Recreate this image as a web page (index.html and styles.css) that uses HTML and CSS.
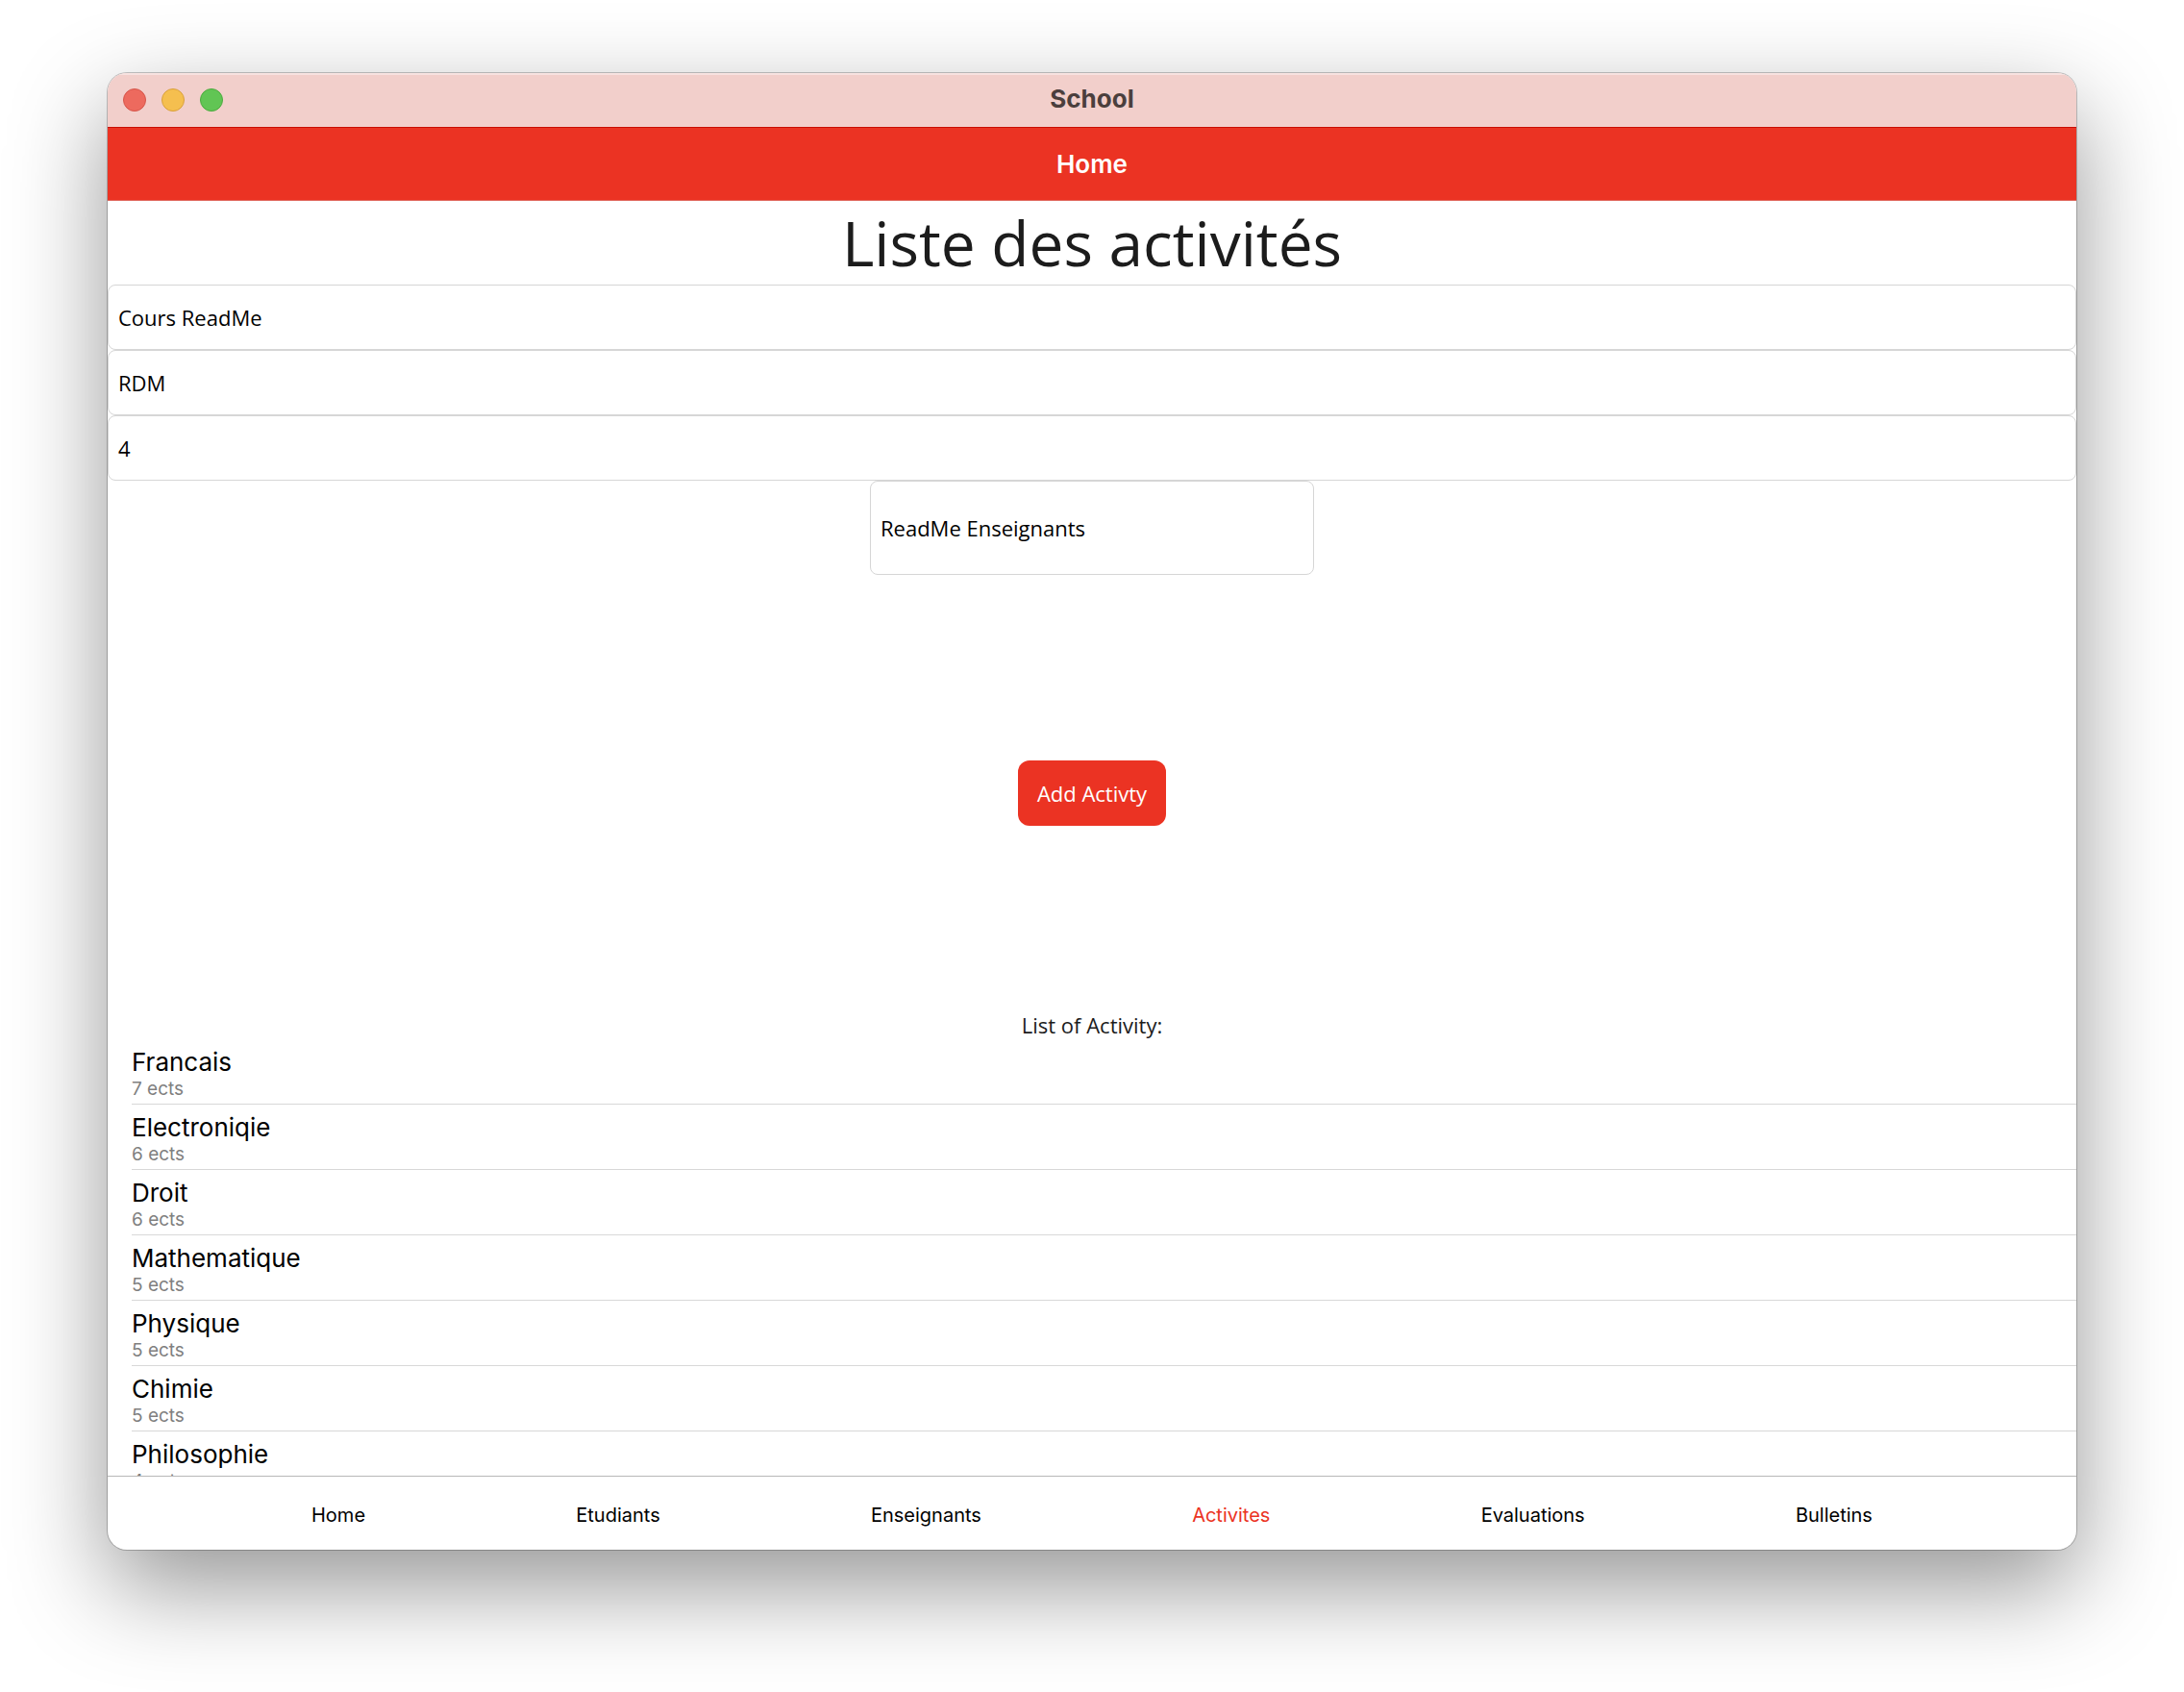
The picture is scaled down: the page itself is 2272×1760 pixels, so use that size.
FILE: index.html
```
<!DOCTYPE html>
<html lang="fr">
<head>
<meta charset="utf-8">
<meta name="viewport" content="width=device-width, initial-scale=1">
<title>School</title>
<link rel="stylesheet" href="styles.css">
</head>
<body>
<div class="window">
  <header class="titlebar">
    <div class="controls">
      <button class="dot dot-close" type="button" aria-label="Fermer"></button>
      <button class="dot dot-minimize" type="button" aria-label="Réduire"></button>
      <button class="dot dot-zoom" type="button" aria-label="Agrandir"></button>
    </div>
    <div class="title">School</div>
  </header>
  <div class="navbar">Home</div>
  <main class="content">
    <h1 class="heading">Liste des activités</h1>
    <form class="form">
      <input class="field" type="text" aria-label="Nom" value="Cours ReadMe">
      <input class="field" type="text" aria-label="Code" value="RDM">
      <input class="field" type="text" aria-label="Crédits" value="4">
      <select class="field picker" aria-label="Enseignant">
        <option>ReadMe Enseignants</option>
      </select>
      <button class="add" type="button">Add Activty</button>
    </form>
    <h2 class="caption">List of Activity:</h2>
    <ul class="list">
      <li class="row"><span class="name">Francais</span><span class="detail">7 ects</span></li>
      <li class="row"><span class="name">Electroniqie</span><span class="detail">6 ects</span></li>
      <li class="row"><span class="name">Droit</span><span class="detail">6 ects</span></li>
      <li class="row"><span class="name">Mathematique</span><span class="detail">5 ects</span></li>
      <li class="row"><span class="name">Physique</span><span class="detail">5 ects</span></li>
      <li class="row"><span class="name">Chimie</span><span class="detail">5 ects</span></li>
      <li class="row"><span class="name">Philosophie</span><span class="detail">4 ects</span></li>
    </ul>
  </main>
  <nav class="tabs">
    <a class="tab" href="#home">Home</a>
    <a class="tab" href="#etudiants">Etudiants</a>
    <a class="tab" href="#enseignants">Enseignants</a>
    <a class="tab tab-active" href="#activites" aria-current="page">Activites</a>
    <a class="tab" href="#evaluations">Evaluations</a>
    <a class="tab" href="#bulletins">Bulletins</a>
  </nav>
</div>
</body>
</html>
```
FILE: styles.css
```
* {
  box-sizing: border-box;
}

body {
  margin: 0;
  height: 100vh;
  padding: 76px 112px 148px;
  display: flex;
  overflow: hidden;
  background: #fff;
  color: #1c1c1c;
  font-family: Inter, sans-serif;
}

.window {
  flex: 1;
  min-width: 0;
  display: flex;
  flex-direction: column;
  overflow: hidden;
  border-radius: 20px;
  background: #fff;
  box-shadow: 0 0 0 1px rgba(0, 0, 0, 0.22), 0 38px 100px rgba(0, 0, 0, 0.42);
}

.titlebar {
  flex: none;
  height: 56px;
  padding: 0 16px;
  display: grid;
  grid-template-columns: 1fr auto 1fr;
  align-items: center;
  background: #f2cfcb;
  box-shadow: inset 0 2px 0 #f7e2e0;
}

.controls {
  display: flex;
  gap: 16px;
}

.dot {
  width: 24px;
  height: 24px;
  padding: 0;
  border: 1px solid;
  border-radius: 50%;
}

.dot-close {
  background: #ed6a5e;
  border-color: #d5554a;
}

.dot-minimize {
  background: #f5bf4f;
  border-color: #d8a03c;
}

.dot-zoom {
  background: #61c554;
  border-color: #4caa3f;
}

.title {
  padding-bottom: 2px;
  color: #4b3f3d;
  font-size: 26px;
  font-weight: 700;
  line-height: 32px;
}

.navbar {
  flex: none;
  height: 77px;
  border-top: 1px solid #c90f02;
  border-bottom: 1px solid #e0695f;
  background: #eb3323;
  color: #fff;
  font-size: 26px;
  font-weight: 600;
  line-height: 75px;
  text-align: center;
}

.content {
  flex: 1;
  min-height: 0;
  overflow: hidden;
  font-family: "Open Sans", sans-serif;
}

.heading {
  margin: 0;
  font-size: 64px;
  font-weight: 400;
  line-height: 87px;
  text-align: center;
}

.form {
  display: flex;
  flex-direction: column;
  align-items: center;
}

.field {
  width: 100%;
  height: 68px;
  padding: 0 10px;
  border: 1px solid #d6d6d6;
  border-radius: 8px;
  background: #fff;
  color: #000;
  font: 22px "Open Sans", sans-serif;
}

.picker {
  appearance: none;
  width: 462px;
  height: 98px;
}

.add {
  margin: 193px 0;
  height: 68px;
  padding: 0 20px;
  border: 0;
  border-radius: 12px;
  background: #eb3323;
  color: #fff;
  font: 22px "Open Sans", sans-serif;
}

.caption {
  margin: 0;
  font-size: 22px;
  font-weight: 400;
  line-height: 29px;
  text-align: center;
}

.list {
  margin: 0;
  padding: 0 0 0 25px;
  list-style: none;
  font-family: Inter, sans-serif;
}

.row {
  height: 68px;
  padding-top: 8px;
  display: flex;
  flex-direction: column;
  border-bottom: 1px solid #d8d8d8;
}

.name {
  color: #000;
  font-size: 26px;
  line-height: 32px;
}

.detail {
  color: #808080;
  font-size: 19px;
  line-height: 24px;
}

.tabs {
  flex: none;
  height: 77px;
  padding: 0 212px;
  display: flex;
  justify-content: space-between;
  align-items: center;
  border-top: 1px solid #b8b8b8;
}

.tab {
  padding-top: 4px;
  color: #000;
  font-size: 20px;
  line-height: 28px;
  text-decoration: none;
}

.tab-active {
  color: #eb3323;
}
```
